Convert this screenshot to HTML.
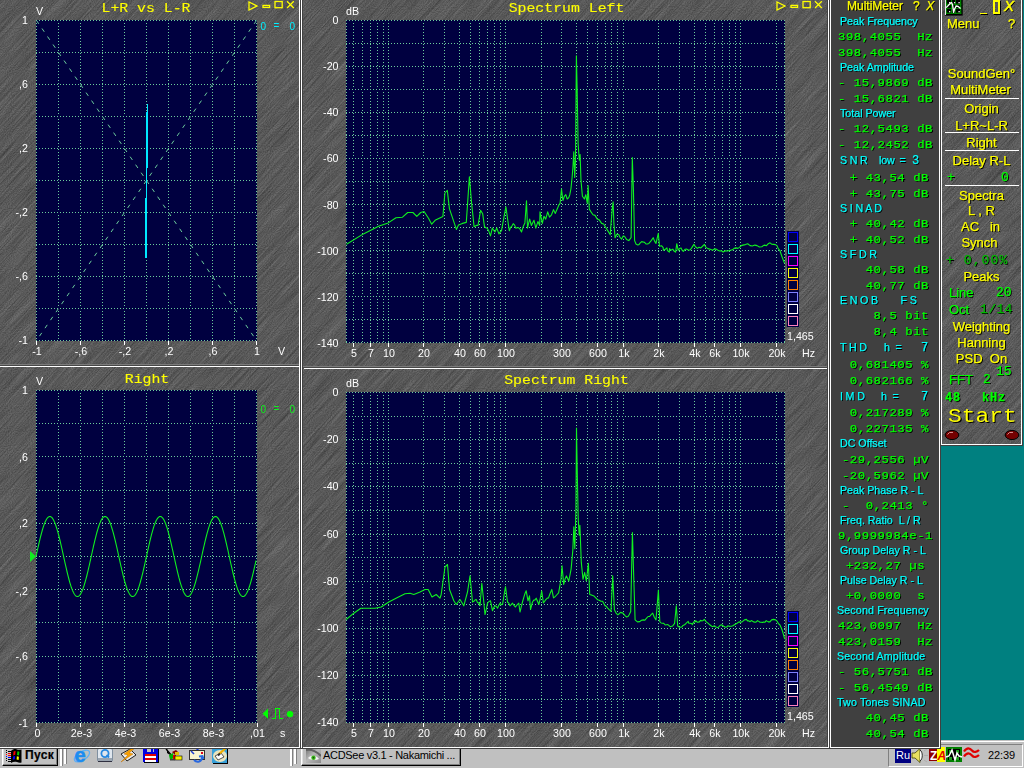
<!DOCTYPE html>
<html lang="ru"><head><meta charset="utf-8"><title>MultiMeter</title>
<style>
html,body{margin:0;padding:0}
body{width:1024px;height:768px;overflow:hidden;background:#008080;position:relative;font-family:"Liberation Sans",Arial,sans-serif}
.abs{position:absolute}
.tex{position:absolute;overflow:hidden;background:#686868}
.tex svg{position:absolute;left:0;top:0}
svg.g{position:absolute;left:0;top:0;opacity:.999}
.ln{position:absolute}
#mm{position:absolute;left:831px;top:0;width:108px;height:747px;background:#404040;overflow:hidden}
#mmt{position:absolute;left:0;top:0;width:108px;height:747px;opacity:.999;-webkit-text-stroke:0.25px}
#mmt div{position:absolute;left:0;white-space:pre;text-shadow:1px 1px 0 #000;line-height:16px;height:16px}
#mm .ti{left:16px;color:#ffff00;font-size:12px}
#mm .ti i{font-style:italic}
#mm .lb{left:9px;color:#00ffff;font-size:10.67px}
#mm .lb.w{left:6px;letter-spacing:0.15px}
#mm .lb.sp{letter-spacing:-0.15px}
#mm .lb b{position:absolute;font-weight:normal;top:0}
#mm .lb b.m{top:1px}
#mm .vl.h{left:3px}
#mm .lb .m{font-family:"Liberation Mono","Courier New",monospace;font-size:12px}
#mm .vl{left:7px;color:#00ff00;font-family:"Liberation Mono","Courier New",monospace;font-size:11.5px;letter-spacing:0.5px;transform:scaleX(1.07);transform-origin:0 0}
#menu{position:absolute;left:942px;top:0;width:79px;height:444px;opacity:.999;-webkit-text-stroke:0.25px}
#menu .mr{position:absolute;left:0;width:79px;text-align:center;font-size:13px;line-height:16px;height:16px;white-space:nowrap;text-shadow:1px 1px 0 #000}
#menu .y{color:#ffff00}
#menu .ga{color:#00ff00}
#menu .gm{color:#00ff00;font-family:"Liberation Mono","Courier New",monospace;font-size:13px}
#menu .gb{color:#00ff00;font-family:"Liberation Mono","Courier New",monospace;font-size:12px;font-weight:bold;letter-spacing:0.75px}
#menu .dm{color:#00b800;font-family:"Liberation Mono","Courier New",monospace;font-size:13px;letter-spacing:1.1px}
#menu .dm2{color:#00b800;font-family:"Liberation Mono","Courier New",monospace;font-size:13px;letter-spacing:0.4px}
#menu .hr{position:absolute;left:3px;width:74px;height:1px;background:#fff}
#start{position:absolute;left:6px;top:409px;color:#ffff00;font-family:"Liberation Mono","Courier New",monospace;font-size:20px;letter-spacing:0;line-height:16px;text-shadow:1px 1px 0 #000;transform:scaleX(1.145);transform-origin:0 0;-webkit-text-stroke:0}
#tb{position:absolute;left:0;top:740px;width:1024px;height:28px;background:#c0c0c0}
.btn{position:absolute;box-sizing:border-box;background:#c0c0c0;border:1px solid;border-color:#fff #000 #000 #fff;box-shadow:inset -1px -1px 0 #808080,inset 1px 1px 0 #dfdfdf}
</style></head><body>
<!-- taskbar -->
<div id="tb">
<div class="ln" style="left:0;top:1px;width:1024px;height:1px;background:#fff"></div>
<div class="btn" style="left:2px;top:4px;width:56px;height:22px"></div>
<svg class="abs" style="left:5px;top:8px" width="18" height="16" viewBox="0 0 18 16">
<g shape-rendering="crispEdges"><g fill="#000"><rect x="1" y="2" width="1" height="1"/><rect x="1" y="4" width="1" height="1"/><rect x="1" y="10" width="1" height="1"/><rect x="1" y="12" width="1" height="1"/><rect x="3" y="3" width="3" height="1"/><rect x="3" y="13" width="3" height="1"/><rect x="3" y="11" width="3" height="1"/></g>
<rect x="1" y="6" width="1" height="1" fill="#f00"/><rect x="1" y="8" width="1" height="1" fill="#00f"/>
<rect x="3" y="5" width="3" height="1" fill="#f00"/><rect x="3" y="7" width="3" height="1" fill="#f00"/><rect x="3" y="9" width="3" height="1" fill="#00f"/></g>
<path d="M6,3 C8,1 10,0.6 12,1.4 C13.5,2 15,2 16.5,1.4 L16.5,14.4 C15,15 13.5,14.6 12,14 C10,13.4 8,13.6 6,15 Z" fill="#000"/>
<path d="M8.6,3.6 C9.2,3.2 9.9,3 10.6,3 L10.2,6.8 C9.5,6.8 8.9,7 8.2,7.4 Z" fill="#f00"/><path d="M12.4,3.2 C13,3.5 13.7,3.7 14.4,3.7 L14,7.4 C13.3,7.4 12.7,7.2 12,6.9 Z" fill="#0c0"/><path d="M8.1,8.6 C8.7,8.2 9.4,8 10.1,8 L9.8,11.2 C9.1,11.2 8.5,11.4 7.8,11.8 Z" fill="#00f"/><path d="M11.9,8.2 C12.5,8.5 13.2,8.7 13.9,8.7 L13.6,11.9 C12.9,11.9 12.3,11.7 11.6,11.4 Z" fill="#ff0"/>
</svg>
<div class="abs" style="left:25px;top:8px;font-size:12px;font-weight:bold;line-height:14px;color:#000;letter-spacing:0.35px;-webkit-text-stroke:0.2px #000">Пуск</div>
<!-- handles -->
<div class="abs" style="left:60px;top:8px;width:2px;height:18px;background:#fff;border-right:1px solid #808080"></div>
<div class="abs" style="left:64px;top:8px;width:2px;height:16px;background:#fff;border-right:1px solid #808080"></div>
<div class="abs" style="left:290px;top:8px;width:2px;height:18px;background:#fff;border-right:1px solid #808080"></div>
<div class="abs" style="left:294px;top:8px;width:2px;height:16px;background:#fff;border-right:1px solid #808080"></div>
<!-- quick launch icons -->
<svg class="abs" style="left:72px;top:7px" width="160" height="18" viewBox="0 0 160 18">
<!-- IE -->
<g><ellipse cx="10" cy="9" rx="8.6" ry="4.2" fill="none" stroke="#60b0f4" stroke-width="1.3" transform="rotate(-32 10 9)"/>
<text x="2.5" y="14.5" font-family="Liberation Sans, Arial, sans-serif" font-weight="bold" font-size="20px" fill="#1c8cf0" stroke="#1c8cf0" stroke-width="0.6">e</text></g>
<!-- QuickTime -->
<g><rect x="25.5" y="1.5" width="15" height="13" rx="1.5" fill="#dfe6ee" stroke="#8090a0"/><rect x="26" y="11" width="14" height="3" fill="#9aa4b0"/><rect x="26" y="14" width="14" height="1" fill="#303040"/>
<circle cx="33" cy="6.5" r="3.6" fill="none" stroke="#2888e0" stroke-width="1.8"/><path d="M34.5,8 L37,10.5" stroke="#2888e0" stroke-width="1.8"/></g>
<!-- Winamp -->
<g><polygon points="49,7 58,2 64,8 55,14" fill="#e8e8e8" stroke="#202020" stroke-width="1"/><polygon points="60,1 52,7 56,8 49,15 61,7 57,6 63,1" fill="#f8a000" stroke="#c07000" stroke-width="0.5"/></g>
<!-- floppy -->
<g shape-rendering="crispEdges"><rect x="71" y="1" width="15" height="14" fill="#0000e0"/><rect x="86" y="2" width="1" height="14" fill="#000"/><rect x="72" y="15" width="14" height="1" fill="#000"/><rect x="75" y="1" width="7" height="4" fill="#c0c0c0"/><rect x="79" y="2" width="2" height="3" fill="#0000e0"/><rect x="73" y="7" width="11" height="8" fill="#fff"/><rect x="73" y="7" width="11" height="2" fill="#e00000"/><rect x="73" y="11" width="11" height="2" fill="#e00000"/></g>
<!-- multi-colour -->
<g><path d="M95,2 L98,8 L95,6 Z" fill="#000"/><path d="M94,2 L100,9" stroke="#000" stroke-width="1.3"/><polygon points="100,5 104,3 107,6 103,8" fill="#800000"/><rect x="103" y="5" width="4" height="3" fill="#e0c000"/><polygon points="97,8 101,6 102,11 98,13" fill="#00b000"/><rect x="101" y="8" width="3" height="5" fill="#e00000"/><rect x="103" y="9" width="7" height="4" fill="#f8f000" stroke="#000" stroke-width="0.6"/><rect x="98" y="12" width="5" height="1.5" fill="#404040"/></g>
<!-- Outlook Express -->
<g><path d="M120,1 C123,0 126,1 126,4" fill="none" stroke="#2040d0" stroke-width="2"/><rect x="117.5" y="3.5" width="15" height="9" fill="#f8f4d0" stroke="#303030" stroke-width="1"/><rect x="129" y="5" width="2" height="2" fill="#e00020"/><path d="M119,4 L122,7" stroke="#2040d0" stroke-width="1.6"/><path d="M122,13 C125,16 130,15 130,10 M127,9.5 L130.5,9 L131.5,12" fill="none" stroke="#2868e0" stroke-width="2"/></g>
<!-- desktop -->
<g><rect x="140" y="1" width="16" height="15" fill="#38a0d8"/><rect x="155" y="2" width="1" height="15" fill="#000"/><rect x="141" y="16" width="15" height="1" fill="#000"/><ellipse cx="148" cy="9" rx="7" ry="6" fill="#e8e4c0"/><polygon points="143,9 149,6 152,10 146,13" fill="#fff" stroke="#303030" stroke-width="0.8"/><path d="M147,7 L154,1" stroke="#f0b000" stroke-width="2.2"/><path d="M146,8.5 L148,6.5" stroke="#303030" stroke-width="2"/></g>
</svg>
<!-- ACDSee button -->
<div class="btn" style="left:301px;top:4px;width:160px;height:22px"></div>
<svg class="abs" style="left:306px;top:8px" width="15" height="15" viewBox="0 0 15 15">
<defs><linearGradient id="eg" x1="0" y1="0" x2="1" y2="1"><stop offset="0" stop-color="#707070"/><stop offset="0.45" stop-color="#b8b8b8"/><stop offset="1" stop-color="#8a8a8a"/></linearGradient></defs>
<rect x="0" y="0" width="15" height="15" fill="url(#eg)"/><path d="M0,2 C5,1 10,3 15,8" fill="none" stroke="#606060" stroke-width="2"/><path d="M2,10 C5,7 10,7 13,11 C10,12.5 5,12.5 2,10 Z" fill="#f4f4f4"/><circle cx="7.5" cy="9.7" r="2.2" fill="#38b818"/><circle cx="7.5" cy="9.7" r="0.9" fill="#205010"/></svg>
<div class="abs" style="left:323px;top:8px;font-size:11px;line-height:14px;color:#000;white-space:nowrap;letter-spacing:-0.3px">ACDSee v3.1 - Nakamichi ...</div>
<!-- tray -->
<div class="abs" style="left:888px;top:4px;width:133px;height:21px;border:1px solid;border-color:#808080 #fff #fff #808080;box-sizing:content-box"></div>
<div class="abs" style="left:895px;top:9px;width:16px;height:14px;background:#000080;color:#fff;font-size:11px;line-height:13px;text-align:center">Ru</div>
<svg class="abs" style="left:911px;top:7px" width="70" height="18" viewBox="0 0 70 18">
<g><polygon points="1,6 4,6 9,1.5 9,15.5 4,11 1,11" fill="#e8e060" stroke="#404000" stroke-width="0.8"/><path d="M9,3 C12,5 12,12 9,14" fill="#fff" stroke="#000" stroke-width="0.8"/><path d="M13,4 L16,2 M13,8.5 L17,8.5 M13,13 L16,15" stroke="#a8a8a8" stroke-width="0.8"/></g>
<g shape-rendering="crispEdges"><rect x="18" y="2" width="8" height="12" fill="#900000"/><rect x="26" y="0" width="8" height="15" fill="#ffff00"/></g>
<g shape-rendering="crispEdges"><rect x="35" y="0" width="16" height="15" fill="#008000"/><rect x="36.5" y="1.5" width="13" height="12" fill="#000" stroke="#008000"/><g fill="#20a020"><rect x="38" y="3" width="3" height="3"/><rect x="45" y="3" width="3" height="3"/><rect x="38" y="10" width="3" height="3"/><rect x="45" y="10" width="3" height="3"/></g></g>
<polyline points="35,10 38,9 41,3 44,13 46,6 48,9 51,10" fill="none" stroke="#fff" stroke-width="1.5"/>
<path d="M53,4.5 C56,0 59,1 61,3.5 C63,6 66,5 68,3 M53,9.5 C56,5 59,6 61,8.5 C63,11 66,10 68,8" fill="none" stroke="#e00000" stroke-width="2.2"/>
<g font-family="Liberation Sans, Arial, sans-serif" font-weight="bold" font-size="12px"><text x="19" y="13" fill="#fff">Z</text><text x="26.5" y="13" fill="#e00000" font-style="italic">A</text></g>
</svg>
<div class="abs" style="left:988px;top:8px;font-size:11px;line-height:14px;color:#000;letter-spacing:-0.1px">22:39</div>
</div>


<!-- textured work area -->
<div class="tex" style="left:0;top:0;width:831px;height:749px">
<svg width="831" height="749">
<defs><filter id="br" x="0" y="0" width="100%" height="100%" color-interpolation-filters="sRGB">
<feTurbulence type="fractalNoise" baseFrequency="0.02 0.85" numOctaves="3" seed="3" result="n"/>
<feColorMatrix in="n" type="matrix" values="0 0 0 0 0  0 0 0 0 0  0 0 0 0 0  0.5 0 0 0 -0.12"/>
<feComposite operator="in" in2="SourceGraphic"/>
</filter>
<filter id="br2" x="0" y="0" width="100%" height="100%" color-interpolation-filters="sRGB">
<feTurbulence type="fractalNoise" baseFrequency="0.02 0.85" numOctaves="3" seed="11" result="n"/>
<feColorMatrix in="n" type="matrix" values="0 0 0 0 1  0 0 0 0 1  0 0 0 0 1  0.22 0 0 0 -0.07"/>
</filter>
<filter id="br3" x="0" y="0" width="100%" height="100%" color-interpolation-filters="sRGB">
<feTurbulence type="fractalNoise" baseFrequency="0.95" numOctaves="1" seed="5" result="n"/>
<feColorMatrix in="n" type="matrix" values="0 0 0 0 0  0 0 0 0 0  0 0 0 0 0  0.5 0 0 0 -0.17"/>
</filter></defs>
<g transform="translate(-720,749) rotate(-47)">
<rect x="480" y="0" width="1140" height="1140" fill="#000" filter="url(#br)"/>
<rect x="480" y="0" width="1140" height="1140" fill="#fff" filter="url(#br2)"/>
</g>
<rect x="0" y="0" width="831" height="749" fill="#000" filter="url(#br3)"/>
</svg>
</div>

<svg class="g" width="831" height="748" viewBox="0 0 831 748">
<g fill="#000040" shape-rendering="crispEdges">
<rect x="36" y="20" width="221" height="321"/>
<rect x="36" y="390" width="221" height="333"/>
<rect x="346" y="20" width="439" height="323"/>
<rect x="346" y="392" width="439" height="331"/>
<rect x="787" y="231" width="12" height="96"/>
<rect x="787" y="611" width="12" height="96"/>
</g>
<g stroke="#6ccc9c" stroke-width="1" stroke-dasharray="1 2" shape-rendering="crispEdges" fill="none">
<line x1="36.5" y1="20" x2="36.5" y2="341"/>
<line x1="58.5" y1="20" x2="58.5" y2="341"/>
<line x1="80.5" y1="20" x2="80.5" y2="341"/>
<line x1="102.5" y1="20" x2="102.5" y2="341"/>
<line x1="124.5" y1="20" x2="124.5" y2="341"/>
<line x1="146.5" y1="20" x2="146.5" y2="341"/>
<line x1="168.5" y1="20" x2="168.5" y2="341"/>
<line x1="190.5" y1="20" x2="190.5" y2="341"/>
<line x1="212.5" y1="20" x2="212.5" y2="341"/>
<line x1="234.5" y1="20" x2="234.5" y2="341"/>
<line x1="256.5" y1="20" x2="256.5" y2="341"/>
<line x1="36.5" y1="390" x2="36.5" y2="723"/>
<line x1="58.5" y1="390" x2="58.5" y2="723"/>
<line x1="80.5" y1="390" x2="80.5" y2="723"/>
<line x1="102.5" y1="390" x2="102.5" y2="723"/>
<line x1="124.5" y1="390" x2="124.5" y2="723"/>
<line x1="146.5" y1="390" x2="146.5" y2="723"/>
<line x1="168.5" y1="390" x2="168.5" y2="723"/>
<line x1="190.5" y1="390" x2="190.5" y2="723"/>
<line x1="212.5" y1="390" x2="212.5" y2="723"/>
<line x1="234.5" y1="390" x2="234.5" y2="723"/>
<line x1="256.5" y1="390" x2="256.5" y2="723"/>
<line x1="346.5" y1="20" x2="346.5" y2="343"/>
<line x1="784.5" y1="20" x2="784.5" y2="343"/>
<line x1="353.5" y1="20" x2="353.5" y2="342"/>
<line x1="362.5" y1="20" x2="362.5" y2="342"/>
<line x1="370.5" y1="20" x2="370.5" y2="342"/>
<line x1="377.5" y1="20" x2="377.5" y2="342"/>
<line x1="383.5" y1="20" x2="383.5" y2="342"/>
<line x1="388.5" y1="20" x2="388.5" y2="342"/>
<line x1="423.5" y1="20" x2="423.5" y2="342"/>
<line x1="444.5" y1="20" x2="444.5" y2="342"/>
<line x1="459.5" y1="20" x2="459.5" y2="342"/>
<line x1="470.5" y1="20" x2="470.5" y2="342"/>
<line x1="479.5" y1="20" x2="479.5" y2="342"/>
<line x1="487.5" y1="20" x2="487.5" y2="342"/>
<line x1="494.5" y1="20" x2="494.5" y2="342"/>
<line x1="500.5" y1="20" x2="500.5" y2="342"/>
<line x1="505.5" y1="20" x2="505.5" y2="342"/>
<line x1="541.5" y1="20" x2="541.5" y2="342"/>
<line x1="561.5" y1="20" x2="561.5" y2="342"/>
<line x1="576.5" y1="20" x2="576.5" y2="342"/>
<line x1="587.5" y1="20" x2="587.5" y2="342"/>
<line x1="597.5" y1="20" x2="597.5" y2="342"/>
<line x1="605.5" y1="20" x2="605.5" y2="342"/>
<line x1="611.5" y1="20" x2="611.5" y2="342"/>
<line x1="617.5" y1="20" x2="617.5" y2="342"/>
<line x1="623.5" y1="20" x2="623.5" y2="342"/>
<line x1="658.5" y1="20" x2="658.5" y2="342"/>
<line x1="679.5" y1="20" x2="679.5" y2="342"/>
<line x1="694.5" y1="20" x2="694.5" y2="342"/>
<line x1="705.5" y1="20" x2="705.5" y2="342"/>
<line x1="714.5" y1="20" x2="714.5" y2="342"/>
<line x1="722.5" y1="20" x2="722.5" y2="342"/>
<line x1="729.5" y1="20" x2="729.5" y2="342"/>
<line x1="735.5" y1="20" x2="735.5" y2="342"/>
<line x1="740.5" y1="20" x2="740.5" y2="342"/>
<line x1="776.5" y1="20" x2="776.5" y2="342"/>
<line x1="346.5" y1="392" x2="346.5" y2="723"/>
<line x1="784.5" y1="392" x2="784.5" y2="723"/>
<line x1="353.5" y1="392" x2="353.5" y2="722"/>
<line x1="362.5" y1="392" x2="362.5" y2="722"/>
<line x1="370.5" y1="392" x2="370.5" y2="722"/>
<line x1="377.5" y1="392" x2="377.5" y2="722"/>
<line x1="383.5" y1="392" x2="383.5" y2="722"/>
<line x1="388.5" y1="392" x2="388.5" y2="722"/>
<line x1="423.5" y1="392" x2="423.5" y2="722"/>
<line x1="444.5" y1="392" x2="444.5" y2="722"/>
<line x1="459.5" y1="392" x2="459.5" y2="722"/>
<line x1="470.5" y1="392" x2="470.5" y2="722"/>
<line x1="479.5" y1="392" x2="479.5" y2="722"/>
<line x1="487.5" y1="392" x2="487.5" y2="722"/>
<line x1="494.5" y1="392" x2="494.5" y2="722"/>
<line x1="500.5" y1="392" x2="500.5" y2="722"/>
<line x1="505.5" y1="392" x2="505.5" y2="722"/>
<line x1="541.5" y1="392" x2="541.5" y2="722"/>
<line x1="561.5" y1="392" x2="561.5" y2="722"/>
<line x1="576.5" y1="392" x2="576.5" y2="722"/>
<line x1="587.5" y1="392" x2="587.5" y2="722"/>
<line x1="597.5" y1="392" x2="597.5" y2="722"/>
<line x1="605.5" y1="392" x2="605.5" y2="722"/>
<line x1="611.5" y1="392" x2="611.5" y2="722"/>
<line x1="617.5" y1="392" x2="617.5" y2="722"/>
<line x1="623.5" y1="392" x2="623.5" y2="722"/>
<line x1="658.5" y1="392" x2="658.5" y2="722"/>
<line x1="679.5" y1="392" x2="679.5" y2="722"/>
<line x1="694.5" y1="392" x2="694.5" y2="722"/>
<line x1="705.5" y1="392" x2="705.5" y2="722"/>
<line x1="714.5" y1="392" x2="714.5" y2="722"/>
<line x1="722.5" y1="392" x2="722.5" y2="722"/>
<line x1="729.5" y1="392" x2="729.5" y2="722"/>
<line x1="735.5" y1="392" x2="735.5" y2="722"/>
<line x1="740.5" y1="392" x2="740.5" y2="722"/>
<line x1="776.5" y1="392" x2="776.5" y2="722"/>
</g>
<g stroke="#000040" stroke-width="1" shape-rendering="crispEdges" fill="none">
<line x1="36" y1="20.5" x2="257" y2="20.5"/>
<line x1="36" y1="52.5" x2="257" y2="52.5"/>
<line x1="36" y1="84.5" x2="257" y2="84.5"/>
<line x1="36" y1="116.5" x2="257" y2="116.5"/>
<line x1="36" y1="148.5" x2="257" y2="148.5"/>
<line x1="36" y1="180.5" x2="257" y2="180.5"/>
<line x1="36" y1="212.5" x2="257" y2="212.5"/>
<line x1="36" y1="244.5" x2="257" y2="244.5"/>
<line x1="36" y1="276.5" x2="257" y2="276.5"/>
<line x1="36" y1="308.5" x2="257" y2="308.5"/>
<line x1="36" y1="340.5" x2="257" y2="340.5"/>
<line x1="36" y1="390.5" x2="257" y2="390.5"/>
<line x1="36" y1="423.5" x2="257" y2="423.5"/>
<line x1="36" y1="456.5" x2="257" y2="456.5"/>
<line x1="36" y1="490.5" x2="257" y2="490.5"/>
<line x1="36" y1="523.5" x2="257" y2="523.5"/>
<line x1="36" y1="556.5" x2="257" y2="556.5"/>
<line x1="36" y1="589.5" x2="257" y2="589.5"/>
<line x1="36" y1="622.5" x2="257" y2="622.5"/>
<line x1="36" y1="656.5" x2="257" y2="656.5"/>
<line x1="36" y1="689.5" x2="257" y2="689.5"/>
<line x1="36" y1="722.5" x2="257" y2="722.5"/>
<line x1="346" y1="20.5" x2="785" y2="20.5"/>
<line x1="346" y1="43.5" x2="785" y2="43.5"/>
<line x1="346" y1="66.5" x2="785" y2="66.5"/>
<line x1="346" y1="89.5" x2="785" y2="89.5"/>
<line x1="346" y1="112.5" x2="785" y2="112.5"/>
<line x1="346" y1="135.5" x2="785" y2="135.5"/>
<line x1="346" y1="158.5" x2="785" y2="158.5"/>
<line x1="346" y1="181.5" x2="785" y2="181.5"/>
<line x1="346" y1="204.5" x2="785" y2="204.5"/>
<line x1="346" y1="227.5" x2="785" y2="227.5"/>
<line x1="346" y1="250.5" x2="785" y2="250.5"/>
<line x1="346" y1="273.5" x2="785" y2="273.5"/>
<line x1="346" y1="296.5" x2="785" y2="296.5"/>
<line x1="346" y1="319.5" x2="785" y2="319.5"/>
<line x1="346" y1="342.5" x2="785" y2="342.5"/>
<line x1="346" y1="392.5" x2="785" y2="392.5"/>
<line x1="346" y1="416.5" x2="785" y2="416.5"/>
<line x1="346" y1="439.5" x2="785" y2="439.5"/>
<line x1="346" y1="463.5" x2="785" y2="463.5"/>
<line x1="346" y1="486.5" x2="785" y2="486.5"/>
<line x1="346" y1="510.5" x2="785" y2="510.5"/>
<line x1="346" y1="534.5" x2="785" y2="534.5"/>
<line x1="346" y1="557.5" x2="785" y2="557.5"/>
<line x1="346" y1="581.5" x2="785" y2="581.5"/>
<line x1="346" y1="604.5" x2="785" y2="604.5"/>
<line x1="346" y1="628.5" x2="785" y2="628.5"/>
<line x1="346" y1="652.5" x2="785" y2="652.5"/>
<line x1="346" y1="675.5" x2="785" y2="675.5"/>
<line x1="346" y1="699.5" x2="785" y2="699.5"/>
<line x1="346" y1="722.5" x2="785" y2="722.5"/>
</g>
<g stroke="#6ccc9c" stroke-width="1" stroke-dasharray="1 2" shape-rendering="crispEdges" fill="none">
<line x1="36" y1="20.5" x2="257" y2="20.5"/>
<line x1="36" y1="52.5" x2="257" y2="52.5"/>
<line x1="36" y1="84.5" x2="257" y2="84.5"/>
<line x1="36" y1="116.5" x2="257" y2="116.5"/>
<line x1="36" y1="148.5" x2="257" y2="148.5"/>
<line x1="36" y1="180.5" x2="257" y2="180.5"/>
<line x1="36" y1="212.5" x2="257" y2="212.5"/>
<line x1="36" y1="244.5" x2="257" y2="244.5"/>
<line x1="36" y1="276.5" x2="257" y2="276.5"/>
<line x1="36" y1="308.5" x2="257" y2="308.5"/>
<line x1="36" y1="340.5" x2="257" y2="340.5"/>
<line x1="36" y1="390.5" x2="257" y2="390.5"/>
<line x1="36" y1="423.5" x2="257" y2="423.5"/>
<line x1="36" y1="456.5" x2="257" y2="456.5"/>
<line x1="36" y1="490.5" x2="257" y2="490.5"/>
<line x1="36" y1="523.5" x2="257" y2="523.5"/>
<line x1="36" y1="556.5" x2="257" y2="556.5"/>
<line x1="36" y1="589.5" x2="257" y2="589.5"/>
<line x1="36" y1="622.5" x2="257" y2="622.5"/>
<line x1="36" y1="656.5" x2="257" y2="656.5"/>
<line x1="36" y1="689.5" x2="257" y2="689.5"/>
<line x1="36" y1="722.5" x2="257" y2="722.5"/>
<line x1="346" y1="20.5" x2="785" y2="20.5"/>
<line x1="346" y1="43.5" x2="785" y2="43.5"/>
<line x1="346" y1="66.5" x2="785" y2="66.5"/>
<line x1="346" y1="89.5" x2="785" y2="89.5"/>
<line x1="346" y1="112.5" x2="785" y2="112.5"/>
<line x1="346" y1="135.5" x2="785" y2="135.5"/>
<line x1="346" y1="158.5" x2="785" y2="158.5"/>
<line x1="346" y1="181.5" x2="785" y2="181.5"/>
<line x1="346" y1="204.5" x2="785" y2="204.5"/>
<line x1="346" y1="227.5" x2="785" y2="227.5"/>
<line x1="346" y1="250.5" x2="785" y2="250.5"/>
<line x1="346" y1="273.5" x2="785" y2="273.5"/>
<line x1="346" y1="296.5" x2="785" y2="296.5"/>
<line x1="346" y1="319.5" x2="785" y2="319.5"/>
<line x1="346" y1="342.5" x2="785" y2="342.5"/>
<line x1="346" y1="392.5" x2="785" y2="392.5"/>
<line x1="346" y1="416.5" x2="785" y2="416.5"/>
<line x1="346" y1="439.5" x2="785" y2="439.5"/>
<line x1="346" y1="463.5" x2="785" y2="463.5"/>
<line x1="346" y1="486.5" x2="785" y2="486.5"/>
<line x1="346" y1="510.5" x2="785" y2="510.5"/>
<line x1="346" y1="534.5" x2="785" y2="534.5"/>
<line x1="346" y1="557.5" x2="785" y2="557.5"/>
<line x1="346" y1="581.5" x2="785" y2="581.5"/>
<line x1="346" y1="604.5" x2="785" y2="604.5"/>
<line x1="346" y1="628.5" x2="785" y2="628.5"/>
<line x1="346" y1="652.5" x2="785" y2="652.5"/>
<line x1="346" y1="675.5" x2="785" y2="675.5"/>
<line x1="346" y1="699.5" x2="785" y2="699.5"/>
<line x1="346" y1="722.5" x2="785" y2="722.5"/>
</g>
<g stroke="#6ccc9c" stroke-width="1" stroke-dasharray="4 5.72" fill="none">
<line x1="36.5" y1="20.5" x2="256.5" y2="340.5"/>
<line x1="256.5" y1="20.5" x2="36.5" y2="340.5"/>
</g>
<g stroke="#00e8ff" fill="none" shape-rendering="crispEdges">
<line x1="146.5" y1="112" x2="146.5" y2="258"/>
<line x1="147.5" y1="104" x2="147.5" y2="168"/>
<line x1="145.5" y1="198" x2="145.5" y2="258"/>
</g>
<polyline fill="none" stroke="#10f020" stroke-width="1.1" points="36.0,556.5 36.5,554.2 37.0,552.0 37.5,549.7 38.0,547.5 38.5,545.3 39.0,543.1 39.5,541.0 40.0,538.9 40.5,536.9 41.0,535.0 41.5,533.1 42.0,531.3 42.5,529.5 43.0,527.9 43.5,526.4 44.0,524.9 44.5,523.6 45.0,522.3 45.5,521.2 46.0,520.2 46.5,519.3 47.0,518.5 47.5,517.9 48.0,517.3 48.5,516.9 49.0,516.7 49.5,516.5 50.0,516.5 50.5,516.6 51.0,516.9 51.5,517.2 52.0,517.7 52.5,518.4 53.0,519.1 53.5,520.0 54.0,521.0 54.5,522.1 55.0,523.3 55.5,524.6 56.0,526.0 56.5,527.6 57.0,529.2 57.5,530.9 58.0,532.7 58.5,534.5 59.0,536.5 59.5,538.5 60.0,540.5 60.5,542.6 61.0,544.8 61.5,547.0 62.0,549.2 62.5,551.5 63.0,553.7 63.5,556.0 64.0,558.3 64.5,560.5 65.0,562.8 65.5,565.0 66.0,567.2 66.5,569.4 67.0,571.5 67.5,573.6 68.0,575.7 68.5,577.6 69.0,579.5 69.5,581.3 70.0,583.1 70.5,584.7 71.0,586.3 71.5,587.8 72.0,589.1 72.5,590.4 73.0,591.6 73.5,592.6 74.0,593.5 74.5,594.3 75.0,595.0 75.5,595.6 76.0,596.0 76.5,596.3 77.0,596.5 77.5,596.5 78.0,596.4 78.5,596.2 79.0,595.9 79.5,595.4 80.0,594.8 80.5,594.1 81.0,593.2 81.5,592.3 82.0,591.2 82.5,590.0 83.0,588.7 83.5,587.3 84.0,585.8 84.5,584.2 85.0,582.5 85.5,580.7 86.0,578.9 86.5,577.0 87.0,575.0 87.5,572.9 88.0,570.8 88.5,568.7 89.0,566.5 89.5,564.3 90.0,562.0 90.5,559.8 91.0,557.5 91.5,555.2 92.0,553.0 92.5,550.7 93.0,548.5 93.5,546.2 94.0,544.1 94.5,541.9 95.0,539.8 95.5,537.8 96.0,535.8 96.5,533.9 97.0,532.0 97.5,530.3 98.0,528.6 98.5,527.0 99.0,525.5 99.5,524.1 100.0,522.9 100.5,521.7 101.0,520.6 101.5,519.7 102.0,518.8 102.5,518.1 103.0,517.6 103.5,517.1 104.0,516.8 104.5,516.6 105.0,516.5 105.5,516.6 106.0,516.7 106.5,517.1 107.0,517.5 107.5,518.1 108.0,518.8 108.5,519.6 109.0,520.5 109.5,521.6 110.0,522.7 110.5,524.0 111.0,525.4 111.5,526.9 112.0,528.5 112.5,530.1 113.0,531.9 113.5,533.7 114.0,535.6 114.5,537.6 115.0,539.6 115.5,541.7 116.0,543.8 116.5,546.0 117.0,548.2 117.5,550.5 118.0,552.7 118.5,555.0 119.0,557.3 119.5,559.5 120.0,561.8 120.5,564.1 121.0,566.3 121.5,568.5 122.0,570.6 122.5,572.7 123.0,574.8 123.5,576.8 124.0,578.7 124.5,580.6 125.0,582.3 125.5,584.0 126.0,585.6 126.5,587.1 127.0,588.6 127.5,589.9 128.0,591.1 128.5,592.2 129.0,593.1 129.5,594.0 130.0,594.7 130.5,595.3 131.0,595.8 131.5,596.2 132.0,596.4 132.5,596.5 133.0,596.5 133.5,596.3 134.0,596.0 134.5,595.6 135.0,595.1 135.5,594.4 136.0,593.6 136.5,592.7 137.0,591.7 137.5,590.5 138.0,589.3 138.5,587.9 139.0,586.5 139.5,584.9 140.0,583.3 140.5,581.5 141.0,579.7 141.5,577.8 142.0,575.9 142.5,573.8 143.0,571.8 143.5,569.6 144.0,567.5 144.5,565.3 145.0,563.0 145.5,560.8 146.0,558.5 146.5,556.2 147.0,554.0 147.5,551.7 148.0,549.4 148.5,547.2 149.0,545.0 149.5,542.9 150.0,540.7 150.5,538.7 151.0,536.7 151.5,534.7 152.0,532.8 152.5,531.1 153.0,529.3 153.5,527.7 154.0,526.2 154.5,524.7 155.0,523.4 155.5,522.2 156.0,521.1 156.5,520.1 157.0,519.2 157.5,518.4 158.0,517.8 158.5,517.3 159.0,516.9 159.5,516.6 160.0,516.5 160.5,516.5 161.0,516.6 161.5,516.9 162.0,517.3 162.5,517.8 163.0,518.4 163.5,519.2 164.0,520.1 164.5,521.1 165.0,522.2 165.5,523.4 166.0,524.8 166.5,526.2 167.0,527.7 167.5,529.4 168.0,531.1 168.5,532.9 169.0,534.8 169.5,536.7 170.0,538.7 170.5,540.8 171.0,542.9 171.5,545.1 172.0,547.3 172.5,549.5 173.0,551.7 173.5,554.0 174.0,556.3 174.5,558.5 175.0,560.8 175.5,563.1 176.0,565.3 176.5,567.5 177.0,569.7 177.5,571.8 178.0,573.9 178.5,575.9 179.0,577.9 179.5,579.7 180.0,581.6 180.5,583.3 181.0,584.9 181.5,586.5 182.0,587.9 182.5,589.3 183.0,590.6 183.5,591.7 184.0,592.7 184.5,593.6 185.0,594.4 185.5,595.1 186.0,595.6 186.5,596.0 187.0,596.3 187.5,596.5 188.0,596.5 188.5,596.4 189.0,596.2 189.5,595.8 190.0,595.3 190.5,594.7 191.0,594.0 191.5,593.1 192.0,592.1 192.5,591.0 193.0,589.8 193.5,588.5 194.0,587.1 194.5,585.6 195.0,584.0 195.5,582.3 196.0,580.5 196.5,578.7 197.0,576.7 197.5,574.7 198.0,572.7 198.5,570.6 199.0,568.4 199.5,566.2 200.0,564.0 200.5,561.8 201.0,559.5 201.5,557.2 202.0,555.0 202.5,552.7 203.0,550.4 203.5,548.2 204.0,546.0 204.5,543.8 205.0,541.7 205.5,539.6 206.0,537.5 206.5,535.6 207.0,533.7 207.5,531.8 208.0,530.1 208.5,528.4 209.0,526.8 209.5,525.4 210.0,524.0 210.5,522.7 211.0,521.6 211.5,520.5 212.0,519.6 212.5,518.8 213.0,518.1 213.5,517.5 214.0,517.1 214.5,516.7 215.0,516.6 215.5,516.5 216.0,516.6 216.5,516.8 217.0,517.1 217.5,517.6 218.0,518.2 218.5,518.9 219.0,519.7 219.5,520.6 220.0,521.7 220.5,522.9 221.0,524.2 221.5,525.6 222.0,527.1 222.5,528.6 223.0,530.3 223.5,532.1 224.0,533.9 224.5,535.8 225.0,537.8 225.5,539.9 226.0,542.0 226.5,544.1 227.0,546.3 227.5,548.5 228.0,550.7 228.5,553.0 229.0,555.3 229.5,557.5 230.0,559.8 230.5,562.1 231.0,564.3 231.5,566.5 232.0,568.7 232.5,570.9 233.0,573.0 233.5,575.0 234.0,577.0 234.5,578.9 235.0,580.8 235.5,582.5 236.0,584.2 236.5,585.8 237.0,587.3 237.5,588.7 238.0,590.0 238.5,591.2 239.0,592.3 239.5,593.2 240.0,594.1 240.5,594.8 241.0,595.4 241.5,595.9 242.0,596.2 242.5,596.4 243.0,596.5 243.5,596.5 244.0,596.3 244.5,596.0 245.0,595.5 245.5,595.0 246.0,594.3 246.5,593.5 247.0,592.6 247.5,591.5 248.0,590.4 248.5,589.1 249.0,587.7 249.5,586.3 250.0,584.7 250.5,583.1 251.0,581.3 251.5,579.5 252.0,577.6 252.5,575.6 253.0,573.6 253.5,571.5 254.0,569.4 254.5,567.2 255.0,565.0 255.5,562.8 256.0,560.5"/>
<polygon points="30,551 36,556.5 30,562" fill="#10f020"/>
<g fill="#00ff00" stroke="none"><polygon points="262.6,713.7 268,708.6 268,718.8"/><circle cx="290" cy="714.1" r="3.2"/></g>
<polyline points="272,718.5 275.5,718.5 275.5,708.5 279.5,708.5 279.5,718.5 283,718.5" fill="none" stroke="#00ff00" stroke-width="1" shape-rendering="crispEdges"/>
<polyline fill="none" stroke="#10f020" stroke-width="1.1" stroke-linejoin="round" points="346.5,244.3 363.4,233.9 379.1,226.0 388.2,222.9 396.0,217.7 402.5,217.2 407.7,212.5 412.9,212.5 416.8,216.4 420.7,212.5 424.1,211.5 428.5,218.2 431.7,224.2 435.1,220.3 442.9,216.4 444.9,193.0 447.3,190.4 449.4,208.6 456.4,229.4 458.5,225.0 462.4,223.4 466.3,222.4 469.4,176.8 471.5,202.1 474.1,226.8 475.4,226.0 476.7,225.2 478.0,225.5 480.6,210.4 482.7,213.8 484.5,226.8 485.8,227.8 487.1,228.1 488.8,231.1 490.5,235.9 492.3,228.1 493.6,230.2 494.9,232.0 496.8,228.1 498.9,233.9 500.2,232.0 501.5,230.7 504.1,216.4 505.9,206.8 507.4,217.7 509.3,230.7 510.6,227.4 511.9,226.1 513.2,223.7 514.5,224.9 515.8,228.1 517.1,227.7 518.4,227.6 519.9,228.9 521.5,232.0 523.2,226.6 524.9,222.9 526.5,200.8 527.5,228.1 529.6,219.0 531.4,225.5 532.7,222.8 534.0,220.3 535.8,228.1 537.9,221.6 539.7,225.5 540.0,211.9 542.3,223.4 544.0,216.2 545.7,219.1 547.7,211.9 549.5,217.1 551.5,214.8 553.5,209.6 555.2,213.4 557.2,209.1 558.9,204.8 560.1,203.3 561.5,189.0 562.9,200.5 564.4,196.2 565.8,194.7 567.2,199.0 568.7,197.6 569.8,194.7 570.9,189.0 572.1,177.5 573.0,166.1 573.8,151.7 574.7,177.5 575.5,160.3 576.4,55.8 577.2,91.6 578.1,143.2 579.3,160.3 580.1,154.6 581.0,180.4 582.4,196.2 584.4,199.0 585.8,194.7 587.3,203.3 588.1,185.6 589.3,209.1 591.0,211.9 593.0,214.8 595.0,215.4 597.3,219.1 599.3,219.9 601.6,223.4 603.6,224.0 605.9,227.7 608.2,231.4 610.2,234.8 612.2,209.1 613.1,201.9 613.9,223.4 615.1,237.7 616.8,234.3 618.8,234.8 620.2,237.7 621.7,239.1 623.1,236.0 624.5,236.3 626.5,239.4 628.8,240.6 631.1,237.7 632.3,157.5 633.4,189.0 634.6,240.6 636.0,244.0 637.4,244.9 638.9,244.6 640.3,242.9 641.7,241.6 643.2,242.0 644.6,242.4 646.0,244.0 647.4,244.0 648.9,243.4 651.2,240.6 653.2,237.7 654.6,241.1 656.0,243.4 658.3,233.4 659.5,246.3 661.5,245.7 663.2,247.7 663.4,250.3 665.3,249.3 665.5,249.2 666.9,247.9 667.5,250.6 669.3,252.1 669.5,248.6 670.9,250.3 672.8,249.1 674.2,251.2 675.6,252.1 676.8,243.7 678.2,250.3 679.6,248.4 681.0,247.9 682.2,250.3 683.3,251.4 685.0,249.3 686.8,249.1 688.5,250.3 690.4,249.8 692.0,247.4 693.9,244.4 695.7,247.0 697.4,248.4 699.0,247.2 700.9,247.9 702.8,246.0 704.4,244.4 706.0,247.4 707.9,248.6 710.3,249.3 712.6,250.3 714.5,248.9 716.1,249.1 718.0,250.3 719.6,251.0 721.5,250.7 723.1,252.1 725.5,250.7 727.8,251.0 730.2,250.3 732.5,249.8 734.1,248.4 736.0,247.9 737.9,248.4 739.5,247.4 741.2,245.6 743.0,245.1 745.4,244.6 747.7,243.7 750.1,245.6 752.4,246.0 754.8,245.1 757.1,245.6 759.4,247.0 761.8,246.7 764.1,245.1 766.5,245.6 768.3,243.7 770.0,242.8 771.6,244.2 773.5,244.4 775.4,244.6 777.0,245.6 778.4,248.9 779.8,250.3 782.2,257.3 784.5,263.1"/>
<polyline fill="none" stroke="#10f020" stroke-width="1.1" stroke-linejoin="round" points="346.2,619.5 353.8,613.2 360.8,608.2 375.0,608.2 381.2,607.0 388.8,602.0 397.5,597.5 405.0,593.8 410.0,593.2 413.8,594.5 420.0,592.0 425.0,589.5 428.2,589.5 432.0,597.0 436.2,594.5 440.0,598.2 441.2,594.5 445.0,567.0 447.5,564.5 449.5,589.5 453.8,600.8 456.2,604.5 460.0,599.5 463.8,605.8 467.5,592.0 470.0,575.8 472.5,602.0 473.8,601.3 475.0,600.1 476.2,599.5 477.5,602.6 478.8,602.7 480.0,605.8 481.8,583.2 483.8,602.0 485.0,614.5 486.2,609.7 487.5,603.2 489.0,601.5 490.5,600.8 492.5,610.8 493.8,607.5 495.0,605.8 496.2,606.2 497.5,608.2 498.8,605.3 500.0,603.2 501.2,604.6 502.5,604.5 505.5,586.5 507.5,602.0 508.8,603.2 510.0,605.8 511.2,604.7 512.5,603.2 514.0,605.4 515.5,607.0 517.1,604.8 518.8,603.2 520.0,612.0 521.2,607.1 522.5,602.0 523.8,597.3 525.0,593.5 526.2,590.8 528.0,600.8 529.5,595.8 530.5,609.5 532.5,602.0 533.8,600.1 535.0,599.9 536.2,598.2 537.5,601.2 538.8,604.5 540.0,599.6 541.7,591.1 543.4,603.0 545.8,599.6 547.1,598.3 548.5,597.9 550.1,593.5 551.8,589.4 553.5,597.9 554.9,596.9 556.2,595.5 558.6,592.8 561.0,579.3 562.0,565.8 563.7,584.4 565.0,579.3 566.4,575.9 568.8,581.0 571.1,569.1 572.8,550.5 573.8,526.9 574.8,548.8 575.9,511.6 576.5,428.1 577.2,467.7 578.2,518.4 579.2,535.3 579.9,525.2 581.3,562.4 583.0,579.3 584.7,572.5 586.3,581.0 588.4,563.4 589.7,594.5 591.3,594.9 592.8,595.5 594.3,596.3 595.8,597.9 597.5,599.7 599.2,600.3 600.9,601.2 602.6,601.3 605.0,605.7 606.3,606.3 607.7,608.1 609.4,609.9 611.0,611.4 612.7,575.9 614.4,609.7 616.1,613.1 617.8,614.8 619.2,613.7 620.5,612.4 622.9,613.1 625.3,615.8 626.6,617.0 628.0,616.5 629.3,614.5 630.7,611.4 632.4,532.6 633.7,575.9 635.1,619.9 637.4,621.9 639.8,621.6 641.5,620.3 643.2,619.9 644.9,620.1 646.6,618.2 648.1,616.5 649.6,616.5 651.1,614.6 652.7,613.1 654.3,617.2 656.0,619.9 658.4,590.1 659.8,621.6 661.1,623.0 662.5,623.3 663.8,623.4 665.2,625.0 666.5,624.8 667.9,624.6 670.2,626.7 672.6,626.0 674.6,623.3 676.3,605.7 677.7,626.0 679.7,627.3 680.8,627.3 682.1,626.7 682.6,625.8 684.5,624.8 685.5,624.0 686.5,622.8 688.2,621.4 688.8,623.3 690.0,623.3 692.0,623.8 692.2,624.6 693.9,621.9 695.6,621.6 695.7,620.6 697.4,622.3 699.4,621.9 700.6,620.3 701.9,620.9 703.1,620.5 704.3,619.4 706.3,621.9 708.0,623.1 709.8,624.8 711.7,626.3 713.0,626.6 714.2,625.8 715.5,626.7 716.7,627.3 717.9,627.6 719.2,626.3 720.4,625.2 721.6,624.8 723.6,626.3 725.4,627.3 726.6,627.0 727.8,625.8 729.1,626.3 730.3,626.3 731.5,626.2 732.8,625.8 734.0,625.0 735.2,624.3 737.0,623.3 739.0,621.9 740.9,622.3 742.7,621.4 744.4,619.9 746.4,619.4 747.6,620.9 748.9,620.9 750.1,621.7 751.3,620.6 752.6,621.2 753.8,621.9 755.0,622.2 756.3,621.9 757.5,620.6 758.8,621.4 760.0,622.3 761.2,622.3 762.5,622.4 763.7,621.9 764.9,622.3 766.2,620.6 768.2,621.9 769.9,621.9 771.6,619.9 773.6,619.4 775.6,619.9 777.3,621.4 778.5,623.8 779.8,624.8 781.0,627.2 782.3,630.5 783.5,634.6 784.7,639.2"/>
<g fill="none" shape-rendering="crispEdges">
<rect x="788.5" y="232.5" width="9" height="9" stroke="#0000ff"/>
<rect x="788.5" y="244.5" width="9" height="9" stroke="#00ffff"/>
<rect x="788.5" y="256.5" width="9" height="9" stroke="#ff00ff"/>
<rect x="788.5" y="268.5" width="9" height="9" stroke="#ffff00"/>
<rect x="788.5" y="280.5" width="9" height="9" stroke="#ff8000"/>
<rect x="788.5" y="292.5" width="9" height="9" stroke="#8080ff"/>
<rect x="788.5" y="304.5" width="9" height="9" stroke="#ffffff"/>
<rect x="788.5" y="316.5" width="9" height="9" stroke="#ff80c0"/>
<rect x="788.5" y="612.5" width="9" height="9" stroke="#0000ff"/>
<rect x="788.5" y="624.5" width="9" height="9" stroke="#00ffff"/>
<rect x="788.5" y="636.5" width="9" height="9" stroke="#ff00ff"/>
<rect x="788.5" y="648.5" width="9" height="9" stroke="#ffff00"/>
<rect x="788.5" y="660.5" width="9" height="9" stroke="#ff8000"/>
<rect x="788.5" y="672.5" width="9" height="9" stroke="#8080ff"/>
<rect x="788.5" y="684.5" width="9" height="9" stroke="#ffffff"/>
<rect x="788.5" y="696.5" width="9" height="9" stroke="#ff80c0"/>
</g>
<g stroke="#fff" stroke-width="1" shape-rendering="crispEdges">
<line x1="36.5" y1="341" x2="36.5" y2="345"/>
<line x1="36.5" y1="723" x2="36.5" y2="727"/>
<line x1="80.5" y1="341" x2="80.5" y2="345"/>
<line x1="80.5" y1="723" x2="80.5" y2="727"/>
<line x1="124.5" y1="341" x2="124.5" y2="345"/>
<line x1="124.5" y1="723" x2="124.5" y2="727"/>
<line x1="168.5" y1="341" x2="168.5" y2="345"/>
<line x1="168.5" y1="723" x2="168.5" y2="727"/>
<line x1="212.5" y1="341" x2="212.5" y2="345"/>
<line x1="212.5" y1="723" x2="212.5" y2="727"/>
<line x1="256.5" y1="341" x2="256.5" y2="345"/>
<line x1="257.5" y1="723" x2="257.5" y2="727"/>
<line x1="353.5" y1="343" x2="353.5" y2="347"/>
<line x1="353.5" y1="723" x2="353.5" y2="727"/>
<line x1="370.5" y1="343" x2="370.5" y2="347"/>
<line x1="370.5" y1="723" x2="370.5" y2="727"/>
<line x1="388.5" y1="343" x2="388.5" y2="347"/>
<line x1="388.5" y1="723" x2="388.5" y2="727"/>
<line x1="423.5" y1="343" x2="423.5" y2="347"/>
<line x1="423.5" y1="723" x2="423.5" y2="727"/>
<line x1="459.5" y1="343" x2="459.5" y2="347"/>
<line x1="459.5" y1="723" x2="459.5" y2="727"/>
<line x1="479.5" y1="343" x2="479.5" y2="347"/>
<line x1="479.5" y1="723" x2="479.5" y2="727"/>
<line x1="505.5" y1="343" x2="505.5" y2="347"/>
<line x1="505.5" y1="723" x2="505.5" y2="727"/>
<line x1="561.5" y1="343" x2="561.5" y2="347"/>
<line x1="561.5" y1="723" x2="561.5" y2="727"/>
<line x1="597.5" y1="343" x2="597.5" y2="347"/>
<line x1="597.5" y1="723" x2="597.5" y2="727"/>
<line x1="623.5" y1="343" x2="623.5" y2="347"/>
<line x1="623.5" y1="723" x2="623.5" y2="727"/>
<line x1="658.5" y1="343" x2="658.5" y2="347"/>
<line x1="658.5" y1="723" x2="658.5" y2="727"/>
<line x1="694.5" y1="343" x2="694.5" y2="347"/>
<line x1="694.5" y1="723" x2="694.5" y2="727"/>
<line x1="714.5" y1="343" x2="714.5" y2="347"/>
<line x1="714.5" y1="723" x2="714.5" y2="727"/>
<line x1="740.5" y1="343" x2="740.5" y2="347"/>
<line x1="740.5" y1="723" x2="740.5" y2="727"/>
<line x1="776.5" y1="343" x2="776.5" y2="347"/>
<line x1="776.5" y1="723" x2="776.5" y2="727"/>
</g>
<g fill="#fff" font-family="Liberation Sans, Arial, sans-serif" font-size="10.67px">
<text x="28" y="24" text-anchor="end">1</text>
<text x="28" y="394" text-anchor="end">1</text>
<text x="28" y="88" text-anchor="end">,6</text>
<text x="28" y="461" text-anchor="end">,6</text>
<text x="28" y="152" text-anchor="end">,2</text>
<text x="28" y="527" text-anchor="end">,2</text>
<text x="28" y="216" text-anchor="end">-,2</text>
<text x="28" y="595" text-anchor="end">-,2</text>
<text x="28" y="280" text-anchor="end">-,6</text>
<text x="28" y="660" text-anchor="end">-,6</text>
<text x="28" y="344" text-anchor="end">-1</text>
<text x="28" y="727" text-anchor="end">-1</text>
<text x="36" y="15" text-anchor="start">V</text>
<text x="36" y="385" text-anchor="start">V</text>
<text x="37.0" y="355" text-anchor="middle">-1</text>
<text x="37.5" y="737" text-anchor="middle">0</text>
<text x="81.0" y="355" text-anchor="middle">-,6</text>
<text x="81.5" y="737" text-anchor="middle">2e-3</text>
<text x="125.0" y="355" text-anchor="middle">-,2</text>
<text x="125.5" y="737" text-anchor="middle">4e-3</text>
<text x="169.0" y="355" text-anchor="middle">,2</text>
<text x="169.5" y="737" text-anchor="middle">6e-3</text>
<text x="213.0" y="355" text-anchor="middle">,6</text>
<text x="213.5" y="737" text-anchor="middle">8e-3</text>
<text x="257.0" y="355" text-anchor="middle">1</text>
<text x="257.5" y="737" text-anchor="middle">,01</text>
<text x="278" y="355" text-anchor="start">V</text>
<text x="280" y="737" text-anchor="start">s</text>
<text x="338.5" y="24" text-anchor="end">0</text>
<text x="338.5" y="70" text-anchor="end">-20</text>
<text x="338.5" y="116" text-anchor="end">-40</text>
<text x="338.5" y="162" text-anchor="end">-60</text>
<text x="338.5" y="209" text-anchor="end">-80</text>
<text x="338.5" y="255" text-anchor="end">-100</text>
<text x="338.5" y="301" text-anchor="end">-120</text>
<text x="338.5" y="347" text-anchor="end">-140</text>
<text x="346" y="15" text-anchor="start">dB</text>
<text x="338.5" y="396" text-anchor="end">0</text>
<text x="338.5" y="443" text-anchor="end">-20</text>
<text x="338.5" y="490" text-anchor="end">-40</text>
<text x="338.5" y="538" text-anchor="end">-60</text>
<text x="338.5" y="585" text-anchor="end">-80</text>
<text x="338.5" y="632" text-anchor="end">-100</text>
<text x="338.5" y="679" text-anchor="end">-120</text>
<text x="338.5" y="726" text-anchor="end">-140</text>
<text x="346" y="387" text-anchor="start">dB</text>
<text x="354" y="357" text-anchor="middle">5</text>
<text x="354" y="737" text-anchor="middle">5</text>
<text x="371" y="357" text-anchor="middle">7</text>
<text x="371" y="737" text-anchor="middle">7</text>
<text x="389" y="357" text-anchor="middle">10</text>
<text x="389" y="737" text-anchor="middle">10</text>
<text x="424" y="357" text-anchor="middle">20</text>
<text x="424" y="737" text-anchor="middle">20</text>
<text x="460" y="357" text-anchor="middle">40</text>
<text x="460" y="737" text-anchor="middle">40</text>
<text x="480" y="357" text-anchor="middle">60</text>
<text x="480" y="737" text-anchor="middle">60</text>
<text x="506" y="357" text-anchor="middle">100</text>
<text x="506" y="737" text-anchor="middle">100</text>
<text x="562" y="357" text-anchor="middle">300</text>
<text x="562" y="737" text-anchor="middle">300</text>
<text x="598" y="357" text-anchor="middle">600</text>
<text x="598" y="737" text-anchor="middle">600</text>
<text x="624" y="357" text-anchor="middle">1k</text>
<text x="624" y="737" text-anchor="middle">1k</text>
<text x="659" y="357" text-anchor="middle">2k</text>
<text x="659" y="737" text-anchor="middle">2k</text>
<text x="695" y="357" text-anchor="middle">4k</text>
<text x="695" y="737" text-anchor="middle">4k</text>
<text x="715" y="357" text-anchor="middle">6k</text>
<text x="715" y="737" text-anchor="middle">6k</text>
<text x="741" y="357" text-anchor="middle">10k</text>
<text x="741" y="737" text-anchor="middle">10k</text>
<text x="777" y="357" text-anchor="middle">20k</text>
<text x="777" y="737" text-anchor="middle">20k</text>
<text x="802" y="357" text-anchor="start">Hz</text>
<text x="802" y="737" text-anchor="start">Hz</text>
<text x="787" y="340" text-anchor="start">1,465</text>
<text x="787" y="720" text-anchor="start">1,465</text>
</g>
<g fill="#ffff00" stroke="#ffff00" stroke-width="0.1" font-family="Liberation Mono, Courier New, monospace" font-size="12px" text-anchor="middle">
<text transform="translate(146,12) scale(1.236,1)">L+R vs L-R</text>
<text transform="translate(147,383) scale(1.236,1)">Right</text>
<text transform="translate(566.5,12) scale(1.236,1)">Spectrum Left</text>
<text transform="translate(566.5,384) scale(1.236,1)">Spectrum Right</text>
</g>
<g font-family="Liberation Sans, Arial, sans-serif" font-size="10px">
<text x="260.5" y="30" fill="#00f0ff">0</text><text x="273.5" y="28.5" fill="#00f0ff">=</text><text x="289.5" y="30" fill="#00f0ff">0</text>
<text x="260.5" y="413" fill="#10f020">0</text><text x="273.5" y="411.5" fill="#10f020">=</text><text x="289.5" y="413" fill="#10f020">0</text>
</g>
<g stroke="#ffff00" stroke-width="1.3" fill="none">
<polygon points="249,2 249,10 257,6"/>
<rect x="263" y="5.4" width="6.6" height="2"/>
<rect x="275" y="1.5" width="7.2" height="6.2"/>
<path d="M287,1.3 L293.8,8 M293.8,1.3 L287,8"/>
</g>
<g stroke="#ffff00" stroke-width="1.3" fill="none">
<polygon points="777,2 777,10 785,6"/>
<rect x="791" y="5.4" width="6.6" height="2"/>
<rect x="803" y="1.5" width="7.2" height="6.2"/>
<path d="M815,1.3 L821.8,8 M821.8,1.3 L815,8"/>
</g>
</svg>

<!-- panel separators -->
<div class="ln" style="left:0;top:364px;width:299px;height:1px;background:#7c7c7c"></div>
<div class="ln" style="left:0;top:365px;width:299px;height:1px;background:#484848"></div>
<div class="ln" style="left:0;top:366px;width:299px;height:1px;background:#fff"></div>
<div class="ln" style="left:303px;top:366px;width:524px;height:1px;background:#7c7c7c"></div>
<div class="ln" style="left:303px;top:367px;width:524px;height:1px;background:#484848"></div>
<div class="ln" style="left:304px;top:368px;width:523px;height:1px;background:#fff"></div>
<div class="ln" style="left:299px;top:0;width:1px;height:748px;background:#fff"></div>
<div class="ln" style="left:300px;top:0;width:1px;height:749px;background:#404040"></div>
<div class="ln" style="left:301px;top:0;width:1px;height:749px;background:#fff"></div>
<div class="ln" style="left:302px;top:0;width:1px;height:749px;background:#404040"></div>
<div class="ln" style="left:827px;top:0;width:1px;height:749px;background:#404040"></div>
<div class="ln" style="left:828px;top:0;width:1px;height:748px;background:#fff"></div>
<div class="ln" style="left:829px;top:0;width:1px;height:749px;background:#404040"></div>
<div class="ln" style="left:830px;top:0;width:1px;height:748px;background:#fff"></div>
<div class="ln" style="left:0;top:747px;width:300px;height:1px;background:#fff"></div>
<div class="ln" style="left:303px;top:747px;width:526px;height:1px;background:#fff"></div>
<div class="ln" style="left:0;top:748px;width:831px;height:1px;background:#404040"></div>

<!-- MultiMeter -->
<div id="mm"><div id="mmt">
<div class="ti" style="top:-2px;">MultiMeter&nbsp;&nbsp;&nbsp;?&nbsp;&nbsp;<i>X</i></div>
<div class="lb" style="top:13px;">Peak Frequency</div>
<div class="vl" style="top:29px;">398,4055  Hz</div>
<div class="vl" style="top:45px;">398,4055  Hz</div>
<div class="lb" style="top:59px;">Peak Amplitude</div>
<div class="vl" style="top:75px;">- 15,9869 dB</div>
<div class="vl" style="top:91px;">- 15,6821 dB</div>
<div class="lb" style="top:105px;">Total Power</div>
<div class="vl" style="top:121px;">- 12,5493 dB</div>
<div class="vl" style="top:137px;">- 12,2452 dB</div>
<div class="lb sp" style="top:152px;">S N R<b style="left:39px">low</b><b style="left:59.5px">=</b><b class="m" style="left:72px">3</b></div>
<div class="vl h" style="top:170px;">  + 43,54 dB</div>
<div class="vl h" style="top:186px;">  + 43,75 dB</div>
<div class="lb sp" style="top:200px;">S I N A D</div>
<div class="vl h" style="top:216px;">  + 40,42 dB</div>
<div class="vl h" style="top:232px;">  + 40,52 dB</div>
<div class="lb sp" style="top:246px;">S F D R</div>
<div class="vl h" style="top:262px;">    40,58 dB</div>
<div class="vl h" style="top:278px;">    40,77 dB</div>
<div class="lb sp" style="top:292px;">E N O B<b style="left:60.5px">F S</b></div>
<div class="vl h" style="top:308px;">     8,5 bit</div>
<div class="vl h" style="top:324px;">     8,4 bit</div>
<div class="lb sp" style="top:339px;">T H D<b style="left:44px">h</b><b style="left:55.5px">=</b><b class="m" style="left:81px">7</b></div>
<div class="vl h" style="top:357px;">  0,681405 %</div>
<div class="vl h" style="top:373px;">  0,682166 %</div>
<div class="lb sp" style="top:388px;">I M D<b style="left:41px">h</b><b style="left:52.5px">=</b><b class="m" style="left:81px">7</b></div>
<div class="vl h" style="top:405px;">  0,217289 %</div>
<div class="vl h" style="top:421px;">  0,227135 %</div>
<div class="lb" style="top:435px;">DC Offset</div>
<div class="vl h" style="top:452px;"> -29,2556 µV</div>
<div class="vl h" style="top:468px;"> -20,5962 µV</div>
<div class="lb" style="top:482px;">Peak Phase R - L</div>
<div class="vl h" style="top:498px;"> -  0,2413 °</div>
<div class="lb" style="top:512px;">Freq. Ratio&nbsp; L / R</div>
<div class="vl" style="top:528px;">9,9999984e-1</div>
<div class="lb" style="top:542px;">Group Delay R - L</div>
<div class="vl" style="top:558px;"> +232,27 µs </div>
<div class="lb" style="top:572px;">Pulse Delay R - L</div>
<div class="vl" style="top:588px;"> +0,0000  s </div>
<div class="lb w" style="top:602px;">Second Frequency</div>
<div class="vl" style="top:618px;">423,0097  Hz</div>
<div class="vl" style="top:634px;">423,0159  Hz</div>
<div class="lb w" style="top:648px;">Second Amplitude</div>
<div class="vl" style="top:664px;">- 56,5751 dB</div>
<div class="vl" style="top:680px;">- 56,4549 dB</div>
<div class="lb w" style="top:694px;">Two Tones SINAD</div>
<div class="vl h" style="top:710px;">    40,45 dB</div>
<div class="vl h" style="top:726px;">    40,54 dB</div>
</div></div>
<div class="ln" style="left:831px;top:747px;width:109px;height:1px;background:#fff"></div>
<div class="ln" style="left:831px;top:748px;width:110px;height:1px;background:#404040"></div>
<div class="ln" style="left:939px;top:0;width:1px;height:748px;background:#fff"></div>
<div class="ln" style="left:940px;top:0;width:1px;height:749px;background:#404040"></div>

<!-- Menu panel -->
<div class="ln" style="left:941px;top:0;width:1px;height:445px;background:#fff"></div>
<div class="tex" style="left:942px;top:0;width:79px;height:444px">
<svg width="79" height="444">
<g transform="translate(-430,444) rotate(-47)">
<rect x="285" y="0" width="395" height="380" fill="#000" filter="url(#br)"/>
<rect x="285" y="0" width="395" height="380" fill="#fff" filter="url(#br2)"/>
</g><rect x="0" y="0" width="79" height="444" fill="#000" filter="url(#br3)"/></svg>
</div>
<div class="ln" style="left:941px;top:444px;width:81px;height:1px;background:#fff"></div>
<div class="ln" style="left:941px;top:445px;width:82px;height:1px;background:#404040"></div>
<div class="ln" style="left:1021px;top:0;width:1px;height:445px;background:#fff"></div>
<div class="ln" style="left:1022px;top:0;width:1px;height:446px;background:#404040"></div>
<div id="menu">
<svg class="abs" style="left:3px;top:0" width="18" height="16" viewBox="945 0 18 16">
<rect x="945" y="0" width="17.7" height="15.6" fill="#000"/><rect x="945.1" y="0" width="0.9" height="15" fill="#fff"/>
<g fill="#008a00"><rect x="946" y="0" width="0.9" height="13.8"/><rect x="951" y="0" width="1.1" height="13.8"/><rect x="955.1" y="0" width="0.9" height="13.8"/><rect x="960.1" y="0" width="1.2" height="13.8"/><rect x="946" y="3.7" width="15.3" height="1.1"/><rect x="946" y="7.9" width="15.3" height="0.9"/><rect x="946" y="12.7" width="15.3" height="1.2"/></g>
<g fill="#f0dcf0"><rect x="949" y="2" width="1.3" height="1.3"/><rect x="954" y="2" width="1.2" height="1.3"/><rect x="958.4" y="2" width="1.4" height="1.3"/><rect x="949" y="11" width="1.3" height="1.3"/><rect x="958.4" y="11" width="1.4" height="1.3"/></g>
<polyline points="946.2,7.6 950.4,3.2 951.6,2.6 952.6,5 953.6,12.4 954.6,9 956.2,6 958.2,6.4 960.6,8.4" fill="none" stroke="#fff" stroke-width="1.3" stroke-linejoin="round"/></svg>
<div class="abs" style="left:38px;top:13px;width:7px;height:1px;background:#ffff00;box-shadow:1px 1px 0 #000"></div>
<div class="abs" style="left:51px;top:0px;width:3px;height:10px;border:2px solid #ffff00;box-shadow:1px 1px 0 #000"></div>
<div class="abs" style="left:62px;top:-2px;color:#ffff00;font-size:15px;font-style:italic;line-height:16px;text-shadow:1px 1px 0 #000;-webkit-text-stroke:0.5px #ffff00">X</div>
<div class="mr y" style="top:16px;text-align:left"><span style="position:absolute;left:5px">Menu</span><span style="position:absolute;left:66px">?</span></div>
<div class="mr y" style="top:66px;">SoundGen°</div>
<div class="mr y" style="top:82px;left:-1px">MultiMeter</div>
<div class="mr y" style="top:101px;">Origin</div>
<div class="mr y" style="top:118px;">L+R~L-R</div>
<div class="mr y" style="top:135px;">Right</div>
<div class="mr y" style="top:153px;">Delay R-L</div>
<div class="mr y" style="top:170px;text-align:left"><span class="gm" style="position:absolute;left:5px">+</span><span class="gm" style="position:absolute;left:59px">0</span></div>
<div class="mr y" style="top:188px;">Spectra</div>
<div class="mr y" style="top:203px;">L , R</div>
<div class="mr y" style="top:219px;left:-1px">AC&nbsp;&nbsp; in</div>
<div class="mr y" style="top:235px;left:-2px">Synch</div>
<div class="mr y" style="top:253px;text-align:left"><span class="dm" style="position:absolute;left:4px">+ 0,00%</span></div>
<div class="mr y" style="top:269px;">Peaks</div>
<div class="mr y" style="top:285px;text-align:left"><span class="ga" style="position:absolute;left:7px">Line</span><span class="gm" style="position:absolute;left:54px">20</span></div>
<div class="mr y" style="top:302px;text-align:left"><span class="ga" style="position:absolute;left:7px">Oct</span><span class="dm2" style="position:absolute;left:38px">1/14</span></div>
<div class="mr y" style="top:319px;">Weighting</div>
<div class="mr y" style="top:335px;">Hanning</div>
<div class="mr y" style="top:351px;">PSD&nbsp; On</div>
<div class="mr y" style="top:372px;text-align:left"><span class="ga" style="position:absolute;left:7px">FFT</span><span class="gm" style="position:absolute;left:41px">2</span><span class="gm" style="position:absolute;left:54px;top:-8px">15</span></div>
<div class="mr y" style="top:390px;text-align:left"><span class="gb" style="position:absolute;left:3px">48</span><span class="gb" style="position:absolute;left:40px">kHz</span></div>
<div class="hr" style="top:98px"></div>
<div class="hr" style="top:132px"></div>
<div class="hr" style="top:150px"></div>
<div class="hr" style="top:185px"></div>
<div id="start">Start</div>
<svg class="abs" style="left:2px;top:429px" width="78" height="12" viewBox="0 0 78 12">
<g><ellipse cx="8" cy="6" rx="6.8" ry="4.6" fill="#740000" stroke="#000" stroke-width="1"/><path d="M3.5,5.5 L5.5,3.5 L9,3.4" fill="none" stroke="#e0a0a0" stroke-width="0.9"/>
<ellipse cx="68" cy="6" rx="6.8" ry="4.6" fill="#740000" stroke="#000" stroke-width="1"/><path d="M63.5,5.5 L65.5,3.5 L69,3.4" fill="none" stroke="#e0a0a0" stroke-width="0.9"/></g></svg>
</div>


</body></html>
